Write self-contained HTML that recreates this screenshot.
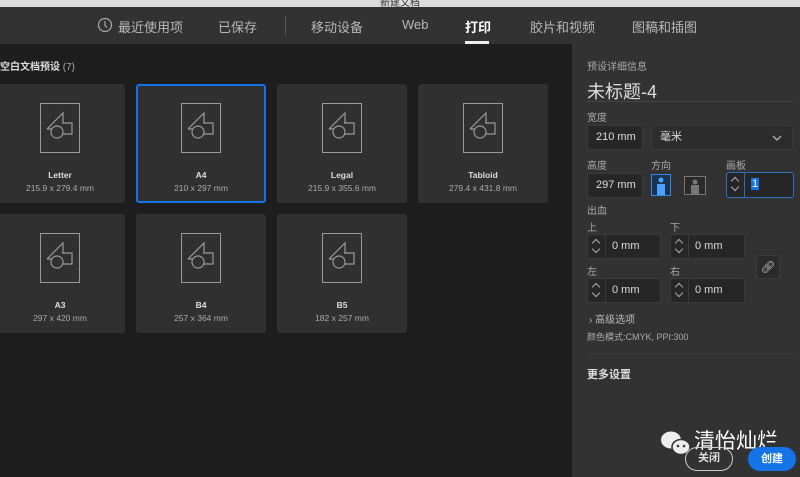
<!DOCTYPE html>
<html><head><meta charset="utf-8"><style>
*{margin:0;padding:0;box-sizing:border-box}
body{width:800px;height:477px;overflow:hidden;background:#1d1d1d;font-family:"Liberation Sans","Noto Sans CJK SC",sans-serif;position:relative;color:#ccc}
.a{position:absolute}
.top{left:0;top:0;width:800px;height:7px;background:#dcdcdc;overflow:hidden}
.nav{left:0;top:7px;width:800px;height:37px;background:#323232}
.nav span{position:absolute;top:10px;font-size:13px;color:#b8b8b8}
.card{position:absolute;width:130px;height:119px;background:#303030;border-radius:3px}
.card.sel{border:2px solid #1473e6}
.card svg{position:absolute;left:45px;top:19px}
.card .n{position:absolute;top:86px;width:100%;text-align:center;font-size:8.5px;color:#ddd;font-weight:bold}
.card .s{position:absolute;top:99px;width:100%;text-align:center;font-size:8.5px;color:#aaa}
.panel{left:572px;top:44px;width:228px;height:433px;background:#323232}
.lbl{position:absolute;font-size:10px;color:#aaa}
.inp{position:absolute;background:#262626;border:1px solid #3a3a3a;border-radius:3px;color:#ddd;font-size:11px;padding-left:8px;line-height:22px}
.sp{position:absolute;left:0;top:0;width:18px;height:100%;border-right:1px solid #3a3a3a}
.sp:before{content:"";position:absolute;left:5px;top:5px;width:5px;height:5px;border-left:1.5px solid #aaa;border-top:1.5px solid #aaa;transform:rotate(45deg)}
.sp:after{content:"";position:absolute;left:5px;top:11px;width:5px;height:5px;border-right:1.5px solid #aaa;border-bottom:1.5px solid #aaa;transform:rotate(45deg)}
</style></head><body>
<div class="a top"><div style="text-align:center;font-size:10px;color:#333;margin-top:-6px">新建文档</div></div>
<div class="a nav">
<svg class="a" style="left:97px;top:10px" width="16" height="16"><circle cx="8" cy="8" r="6.5" fill="none" stroke="#aaa" stroke-width="1.2"/><path d="M8 4v4.5l2 2" stroke="#aaa" fill="none" stroke-width="1.2"/></svg>
<span style="left:118px">最近使用项</span><span style="left:218px">已保存</span>
<div class="a" style="left:285px;top:9px;width:1px;height:20px;background:#555"></div>
<span style="left:311px">移动设备</span><span style="left:402px">Web</span>
<span style="left:465px;color:#fff;font-weight:bold">打印</span>
<div class="a" style="left:465px;top:34px;width:24px;height:3px;background:#eee"></div>
<span style="left:530px">胶片和视频</span><span style="left:632px">图稿和插图</span>
</div>
<div class="a" style="left:0;top:58px;font-size:10px;color:#ddd;font-weight:bold">空白文档预设 <span style="font-weight:normal;color:#aaa">(7)</span></div>

<div class="card" style="left:-5px;top:84px"><svg width="41" height="51"><rect x="0.5" y="0.5" width="39" height="49" fill="none" stroke="#999"/><path d="M7 26 L23 10 L23 20 M7 26 L13 26 M22 20 L32 20 L32 31 L23 31" fill="none" stroke="#999" stroke-width="1.2"/><circle cx="17" cy="29" r="6" fill="#303030" stroke="#999" stroke-width="1.2"/></svg><div class="n">Letter</div><div class="s">215.9 x 279.4 mm</div></div>
<div class="card sel" style="left:136px;top:84px"><svg width="41" height="51" style="left:43px;top:17px"><rect x="0.5" y="0.5" width="39" height="49" fill="none" stroke="#999"/><path d="M7 26 L23 10 L23 20 M7 26 L13 26 M22 20 L32 20 L32 31 L23 31" fill="none" stroke="#999" stroke-width="1.2"/><circle cx="17" cy="29" r="6" fill="#303030" stroke="#999" stroke-width="1.2"/></svg><div class="n" style="top:84px">A4</div><div class="s" style="top:97px">210 x 297 mm</div></div>
<div class="card" style="left:277px;top:84px"><svg width="41" height="51"><rect x="0.5" y="0.5" width="39" height="49" fill="none" stroke="#999"/><path d="M7 26 L23 10 L23 20 M7 26 L13 26 M22 20 L32 20 L32 31 L23 31" fill="none" stroke="#999" stroke-width="1.2"/><circle cx="17" cy="29" r="6" fill="#303030" stroke="#999" stroke-width="1.2"/></svg><div class="n">Legal</div><div class="s">215.9 x 355.6 mm</div></div>
<div class="card" style="left:418px;top:84px"><svg width="41" height="51"><rect x="0.5" y="0.5" width="39" height="49" fill="none" stroke="#999"/><path d="M7 26 L23 10 L23 20 M7 26 L13 26 M22 20 L32 20 L32 31 L23 31" fill="none" stroke="#999" stroke-width="1.2"/><circle cx="17" cy="29" r="6" fill="#303030" stroke="#999" stroke-width="1.2"/></svg><div class="n">Tabloid</div><div class="s">279.4 x 431.8 mm</div></div>
<div class="card" style="left:-5px;top:214px"><svg width="41" height="51"><rect x="0.5" y="0.5" width="39" height="49" fill="none" stroke="#999"/><path d="M7 26 L23 10 L23 20 M7 26 L13 26 M22 20 L32 20 L32 31 L23 31" fill="none" stroke="#999" stroke-width="1.2"/><circle cx="17" cy="29" r="6" fill="#303030" stroke="#999" stroke-width="1.2"/></svg><div class="n">A3</div><div class="s">297 x 420 mm</div></div>
<div class="card" style="left:136px;top:214px"><svg width="41" height="51"><rect x="0.5" y="0.5" width="39" height="49" fill="none" stroke="#999"/><path d="M7 26 L23 10 L23 20 M7 26 L13 26 M22 20 L32 20 L32 31 L23 31" fill="none" stroke="#999" stroke-width="1.2"/><circle cx="17" cy="29" r="6" fill="#303030" stroke="#999" stroke-width="1.2"/></svg><div class="n">B4</div><div class="s">257 x 364 mm</div></div>
<div class="card" style="left:277px;top:214px"><svg width="41" height="51"><rect x="0.5" y="0.5" width="39" height="49" fill="none" stroke="#999"/><path d="M7 26 L23 10 L23 20 M7 26 L13 26 M22 20 L32 20 L32 31 L23 31" fill="none" stroke="#999" stroke-width="1.2"/><circle cx="17" cy="29" r="6" fill="#303030" stroke="#999" stroke-width="1.2"/></svg><div class="n">B5</div><div class="s">182 x 257 mm</div></div>

<div class="a panel"></div>
<div class="lbl" style="left:587px;top:58px">预设详细信息</div>
<div class="a" style="left:587px;top:78px;font-size:18px;color:#ddd">未标题-4</div>
<div class="a" style="left:587px;top:101px;width:207px;height:1px;background:#444"></div>
<div class="lbl" style="left:587px;top:109px">宽度</div>
<div class="inp" style="left:587px;top:125px;width:56px;height:25px">210 mm</div>
<div class="inp" style="left:651px;top:125px;width:142px;height:25px;background:#2c2c2c">毫米<svg class="a" style="right:10px;top:9px" width="10" height="7"><path d="M1 1l4 4 4-4" stroke="#aaa" fill="none" stroke-width="1.5"/></svg></div>
<div class="lbl" style="left:587px;top:157px">高度</div><div class="lbl" style="left:651px;top:157px">方向</div><div class="lbl" style="left:726px;top:157px">画板</div>
<div class="inp" style="left:587px;top:173px;width:56px;height:25px">297 mm</div>
<svg class="a" style="left:651px;top:174px" width="20" height="22"><rect x="0.5" y="0.5" width="19" height="21" fill="#1a3350" stroke="#2d8ceb"/><circle cx="10" cy="6" r="2.5" fill="#4aa3ff"/><rect x="6" y="10" width="8" height="11" fill="#4aa3ff"/></svg>
<svg class="a" style="left:684px;top:176px" width="22" height="19"><rect x="0.5" y="0.5" width="21" height="18" fill="#2a2a2a" stroke="#777"/><circle cx="11" cy="6" r="2.5" fill="#777"/><rect x="7" y="9" width="8" height="9" fill="#777"/></svg>
<div class="inp" style="left:726px;top:172px;width:68px;height:26px;border-color:#2d6fc0;padding-left:24px"><div class="sp" style="border-color:#2d6fc0"></div><span style="background:#1473e6;color:#fff;padding:0 1px">1</span></div>
<div class="lbl" style="left:587px;top:202px">出血</div>
<div class="lbl" style="left:587px;top:219px">上</div><div class="lbl" style="left:670px;top:219px">下</div>
<div class="inp" style="left:587px;top:234px;width:74px;height:25px;padding-left:24px"><div class="sp"></div>0 mm</div>
<div class="inp" style="left:670px;top:234px;width:75px;height:25px;padding-left:24px"><div class="sp"></div>0 mm</div>
<div class="a" style="left:756px;top:255px;width:24px;height:24px;background:#2a2a2a;border:1px solid #3a3a3a;border-radius:3px;color:#bbb;font-size:12px;text-align:center;line-height:22px">&#x1F517;&#xFE0E;</div>
<div class="lbl" style="left:587px;top:263px">左</div><div class="lbl" style="left:670px;top:263px">右</div>
<div class="inp" style="left:587px;top:278px;width:74px;height:25px;padding-left:24px"><div class="sp"></div>0 mm</div>
<div class="inp" style="left:670px;top:278px;width:75px;height:25px;padding-left:24px"><div class="sp"></div>0 mm</div>
<div class="a" style="left:589px;top:311px;font-size:10px;color:#bbb">› 高级选项</div>
<div class="lbl" style="left:587px;top:330px;font-size:9px">颜色模式:CMYK, PPI:300</div>
<div class="a" style="left:587px;top:353px;width:207px;height:1px;background:#3c3c3c"></div>
<div class="a" style="left:587px;top:366px;font-size:11px;color:#ddd;font-weight:bold">更多设置</div>
<svg class="a" style="left:660px;top:430px" width="32" height="26"><ellipse cx="11" cy="10" rx="10" ry="8.5" fill="#eee"/><ellipse cx="21" cy="17" rx="9" ry="7.5" fill="#eee" stroke="#323232" stroke-width="1.5"/><circle cx="18" cy="16" r="1.3" fill="#333"/><circle cx="24" cy="16" r="1.3" fill="#333"/></svg>
<div class="a" style="left:694px;top:425px;font-size:21px;color:#fff">清怡灿烂</div>
<div class="a" style="left:685px;top:447px;width:48px;height:24px;border:1.5px solid #ccc;border-radius:12px;color:#ddd;font-size:11px;text-align:center;line-height:21px;font-weight:bold">关闭</div>
<div class="a" style="left:748px;top:447px;width:48px;height:24px;background:#1473e6;border-radius:12px;color:#fff;font-size:11px;text-align:center;line-height:24px;font-weight:bold">创建</div>
</body></html>
